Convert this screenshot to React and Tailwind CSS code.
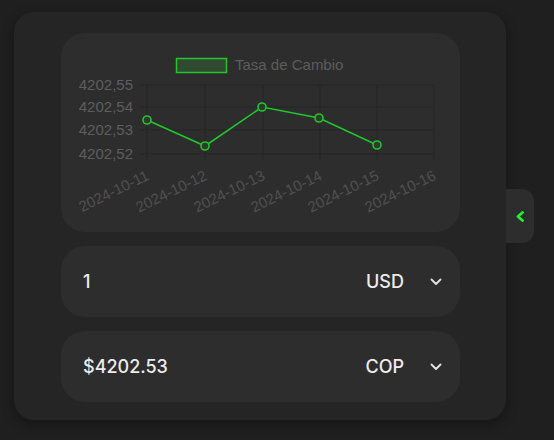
import React from 'react';

const gridX = [147, 205, 263, 320, 377, 434];
const gridY = [85, 107, 130, 154];
const yLabels = ['4202,55', '4202,54', '4202,53', '4202,52'];
const dates = ['2024-10-11', '2024-10-12', '2024-10-13', '2024-10-14', '2024-10-15', '2024-10-16'];
const points = [
  [147, 120],
  [205, 146],
  [262, 107],
  [319, 118],
  [377, 145],
];

const RateChart = () => (
  <svg viewBox="61 33 399 199" className="h-full w-full" style={{ fontFamily: '"Liberation Sans", Arial, sans-serif' }}>
    {/* legend */}
    <rect x="176.5" y="58.5" width="50" height="14" fill="#2f4a31" stroke="#22c52d" strokeWidth="1.5" />
    <text x="235" y="70" fontSize="15" fill="#5c5c5c">Tasa de Cambio</text>

    {/* grid */}
    {gridX.map((x) => (
      <line key={x} x1={x} y1="85" x2={x} y2="161" stroke="#272727" strokeWidth="1" />
    ))}
    {gridY.map((y) => (
      <line key={y} x1="140" y1={y} x2="434" y2={y} stroke="#272727" strokeWidth="1" />
    ))}

    {/* y axis labels */}
    {yLabels.map((l, i) => (
      <text key={l} x="133" y={gridY[i] + 5} fontSize="15" fill="#5e5e5e" textAnchor="end">{l}</text>
    ))}

    {/* x axis labels */}
    {dates.map((d, i) => (
      <text
        key={d}
        x={gridX[i] + 3}
        y="179"
        fontSize="15"
        fill="#505050"
        textAnchor="end"
        transform={`rotate(-26 ${gridX[i] + 3} 179)`}
      >
        {d}
      </text>
    ))}

    {/* data line */}
    <polyline
      points={points.map((p) => p.join(',')).join(' ')}
      fill="none"
      stroke="#22c52d"
      strokeWidth="1.6"
    />
    {points.map(([x, y]) => (
      <circle key={x} cx={x} cy={y} r="4" fill="#2d3a2d" stroke="#22c52d" strokeWidth="1.6" />
    ))}
  </svg>
);

const Chevron = () => (
  <svg width="12" height="8" viewBox="0 0 12 8" fill="none">
    <path d="M1.5 1.5 L6 6 L10.5 1.5" stroke="#e5e5e5" strokeWidth="1.8" strokeLinecap="round" strokeLinejoin="round" />
  </svg>
);

const CurrencyRow = ({ value, code }) => (
  <div className="flex h-[71px] items-center rounded-[24px] bg-[#2d2d2d] pl-[22px] pr-[18px]">
    <span className="flex-1 text-[18px] font-medium text-[#ececec]">{value}</span>
    <span className="mr-[26px] text-[18px] font-medium text-[#ececec]">{code}</span>
    <Chevron />
  </div>
);

export default function App() {
  return (
    <div
      className="flex h-[440px] w-[554px] items-center bg-[#1f1f1f] pb-[8px] pl-[14px]"
      style={{ fontFamily: 'Inter, "Open Sans", sans-serif' }}
    >
      <div className="flex h-[408px] w-[492px] flex-col gap-[14px] rounded-[20px] bg-[#252525] pl-[47px] pr-[46px] pt-[21px] shadow-[0_4px_12px_rgba(0,0,0,0.35)]">
        <div className="h-[199px] overflow-hidden rounded-[24px] bg-[#2d2d2d]">
          <RateChart />
        </div>
        <CurrencyRow value="1" code="USD" />
        <CurrencyRow value="$4202.53" code="COP" />
      </div>

      {/* side tab */}
      <div className="flex h-[54px] w-[28px] items-center justify-center rounded-r-[12px] bg-[#2d2d2d]">
        <svg width="10" height="11" viewBox="0 0 10 11" fill="none">
          <path d="M7.5 1.5 L3 5.5 L7.5 9.5" stroke="#22ee33" strokeWidth="2.8" strokeLinecap="round" strokeLinejoin="round" />
        </svg>
      </div>
    </div>
  );
}
